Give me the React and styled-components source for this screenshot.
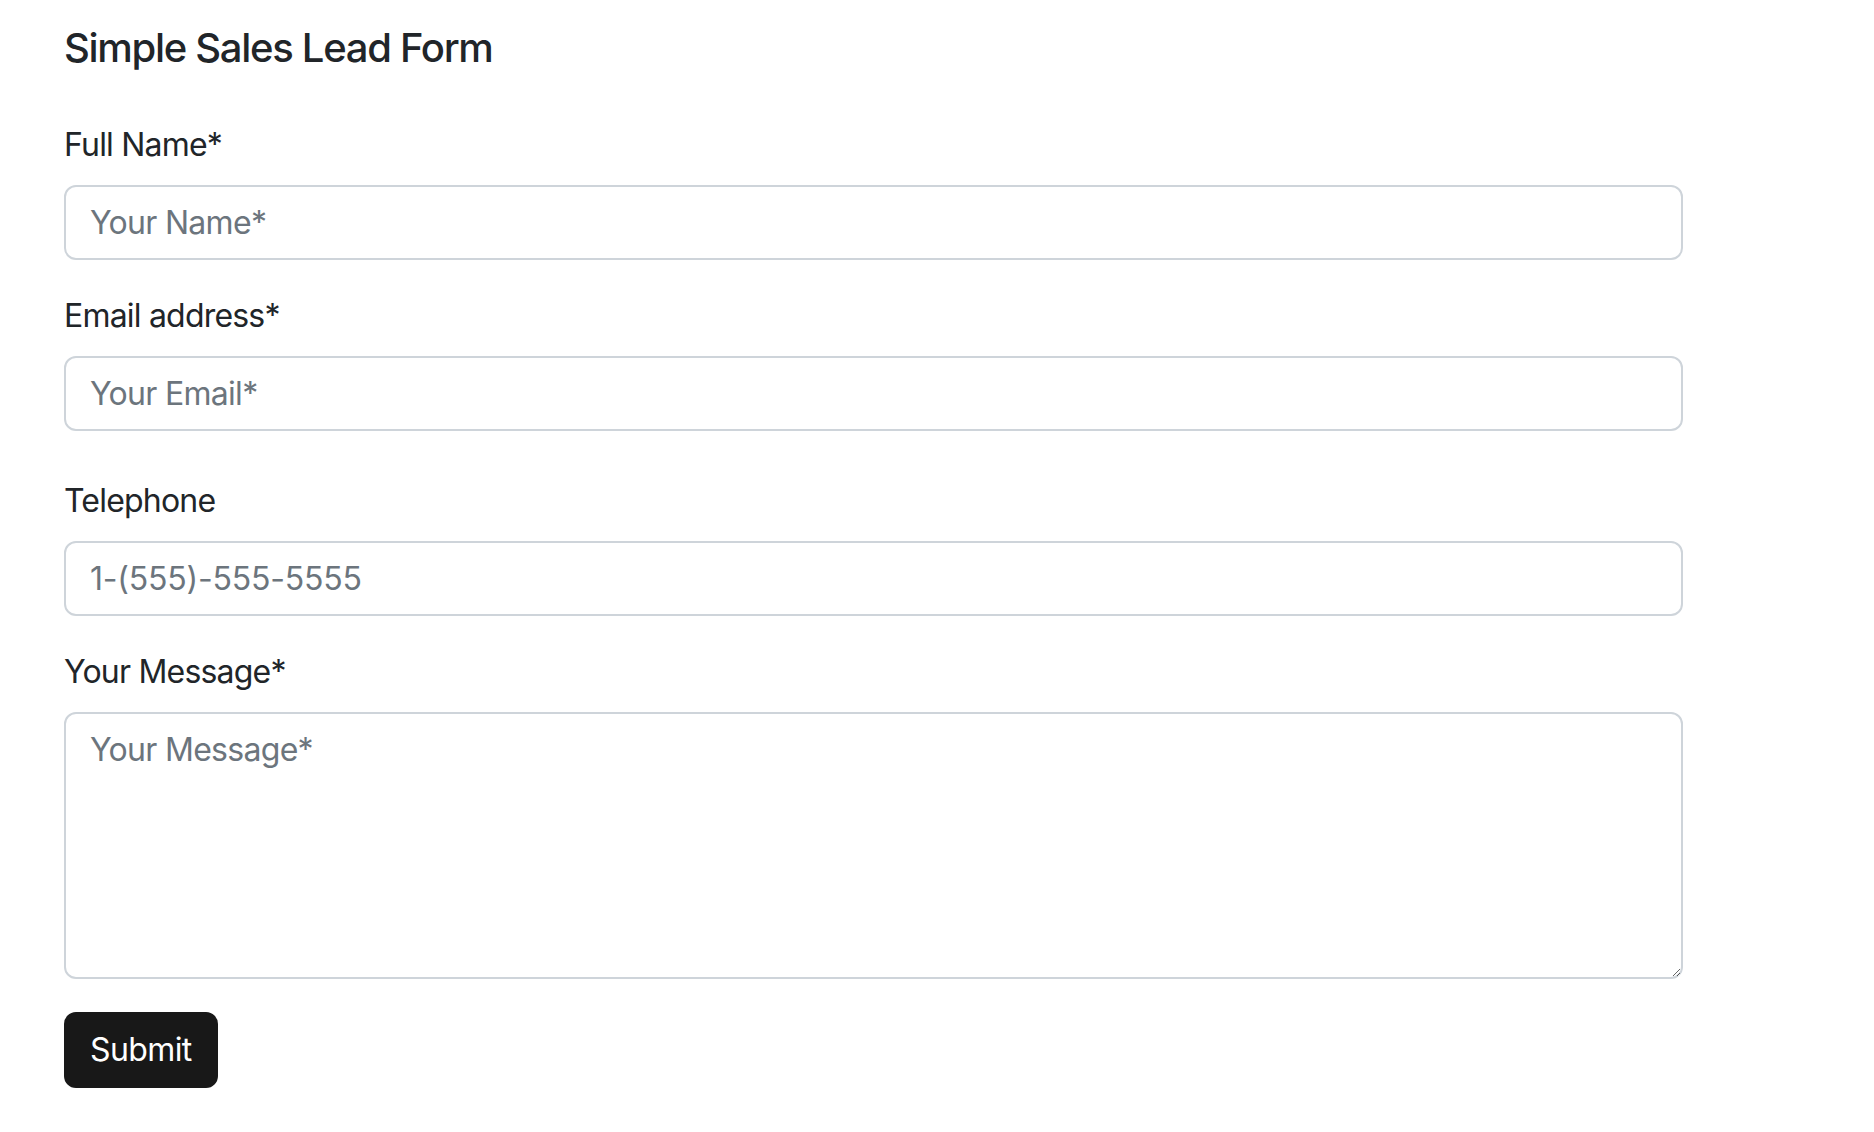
import styled, { createGlobalStyle } from "styled-components";

const GlobalStyle = createGlobalStyle`
    body {
        margin: 0;
        background-color: #fff;
        font-family: Inter, "Noto Sans", "Liberation Sans", sans-serif;
        color: #212529;
    }
`;

const Page = styled.div`
    padding: 24px 191px 40px 64px;
`;

const Title = styled.h5`
    font-size: 40px;
    line-height: 48px;
    font-weight: 500;
    letter-spacing: -1.3px;
    margin: 0 0 49px 0;
    color: #212529;
`;

const Form = styled.form`
    display: flex;
    flex-direction: column;
    max-width: 1619px;
`;

const Group = styled.div`
    display: flex;
    flex-direction: column;
    margin-bottom: ${(props) => props.$gap || 32}px;
`;

const Label = styled.label`
    font-size: 32px;
    line-height: 48px;
    font-weight: 400;
    letter-spacing: -0.8px;
    margin-bottom: 16px;
    color: #212529;
`;

const fieldStyles = `
    box-sizing: border-box;
    width: 100%;
    font-family: inherit;
    font-size: 32px;
    line-height: 48px;
    color: #212529;
    background-color: #fff;
    border: 2px solid #ced4da;
    border-radius: 12px;
    padding: 11px 24px;
    outline: none;

    &::placeholder {
        color: #6c757d;
        opacity: 1;
    }
`;

const Input = styled.input`
    ${fieldStyles}
    letter-spacing: ${(props) => props.$tracking ?? -0.7}px;
    height: 75px;
`;

const TextArea = styled.textarea`
    ${fieldStyles}
    letter-spacing: -0.7px;
    padding: 12px 24px;
    height: 267px;
    resize: vertical;
    display: block;
`;

const SubmitButton = styled.button`
    align-self: flex-start;
    box-sizing: border-box;
    height: 76px;
    padding: 12px 24px;
    border: 2px solid #181818;
    border-radius: 12px;
    background-color: #181818;
    color: #fff;
    font-family: inherit;
    font-size: 32px;
    line-height: 48px;
    font-weight: 400;
    letter-spacing: -0.6px;
    cursor: pointer;
`;

const fields = [
    { id: "name", label: "Full Name*", placeholder: "Your Name*", type: "text", gap: 32 },
    { id: "email", label: "Email address*", placeholder: "Your Email*", type: "email", gap: 46 },
    { id: "phone", label: "Telephone", placeholder: "1-(555)-555-5555", type: "tel", gap: 32, tracking: -0.2 },
];

export default function App() {
    return (
        <Page>
            <GlobalStyle />
            <Title>Simple Sales Lead Form</Title>
            <Form onSubmit={(e) => e.preventDefault()}>
                {fields.map((f) => (
                    <Group key={f.id} $gap={f.gap}>
                        <Label htmlFor={f.id}>{f.label}</Label>
                        <Input id={f.id} type={f.type} placeholder={f.placeholder} $tracking={f.tracking} />
                    </Group>
                ))}
                <Group $gap={33}>
                    <Label htmlFor="message">Your Message*</Label>
                    <TextArea id="message" rows={5} placeholder="Your Message*" />
                </Group>
                <SubmitButton type="submit">Submit</SubmitButton>
            </Form>
        </Page>
    );
}
